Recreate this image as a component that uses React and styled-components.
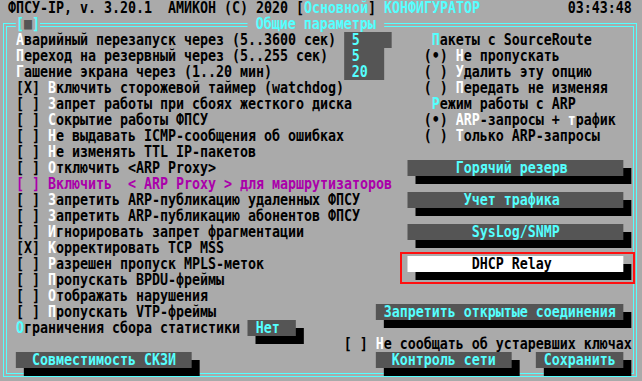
import React from "react";
import styled, { createGlobalStyle } from "styled-components";

const GlobalStyle = createGlobalStyle`
  html, body {
    margin: 0;
    padding: 0;
    overflow: hidden;
    background: #aaaaaa;
  }
`;

const Page = styled.div`
  position: relative;
  width: 642px;
  height: 381px;
  overflow: hidden;
  background: #aaaaaa;
  color: #000;
  font-family: "DejaVu Sans Mono", "Liberation Mono", monospace;
  font-weight: bold;
  font-size: 16px;
`;

// text mode grid: 80 columns of 9.6px squeezed to 8px
const Screen = styled.div`
  width: 768px;
  transform: scaleX(0.833333);
  transform-origin: 0 0;
`;

const Body = styled(Screen)`
  margin: 8px 0 0 -4px;
`;

const Frame = styled.div`
  position: relative;
  box-sizing: border-box;
  width: 634px;
  height: 354px;
  margin: 7px 0 0 3px;
  border: 1px solid #55ffff;
  box-shadow: inset 0 0 0 2px #aaaaaa, inset 0 0 0 3px #55ffff;
`;

const Caption = styled(Screen)`
  position: absolute;
  top: -8px;
  left: -4px;
`;

const Row = styled.div`
  display: grid;
  grid-template-columns: repeat(80, 9.6px);
  height: 16px;
  line-height: 16px;
  letter-spacing: -0.033px;
`;

const toneColor = {
  black: "#000000",
  cyan: "#55ffff",
  white: "#ffffff",
  magenta: "#aa00aa",
  dark: "#555555",
};

const Seg = styled.span`
  grid-row: 1;
  grid-column: ${(p) => p.$c + 1} / span ${(p) => p.$w};
  white-space: pre;
  color: ${(p) => toneColor[p.$tone || "black"]};
  background: ${(p) => (p.$solid ? "#aaaaaa" : "transparent")};
`;

const Hot = styled.span`
  color: ${(p) => toneColor[p.$tone || "white"]};
`;

const Field = styled.span`
  grid-row: 1;
  grid-column: ${(p) => p.$c + 1} / span ${(p) => p.$w};
  white-space: pre;
  background: #555555;
  color: #55ffff;
`;

const Button = styled.span`
  grid-row: 1;
  grid-column: ${(p) => p.$c + 1} / span ${(p) => p.$w};
  white-space: pre;
  background: ${(p) => (p.$active ? "#ffffff" : "#555555")};
  color: ${(p) => (p.$active ? "#000000" : "#55ffff")};
  box-shadow: 9.6px 8px 0 #000000;
`;

const Highlight = styled.div`
  position: absolute;
  left: 400px;
  top: 252px;
  width: 235px;
  height: 32px;
  box-sizing: border-box;
  border: 2px solid #ff1010;
  pointer-events: none;
`;

const Label = ({ c, text, hot = "white" }) => (
  <Seg $c={c} $w={text.length}>
    <Hot $tone={hot}>{text[0]}</Hot>
    {text.slice(1)}
  </Seg>
);

const Check = ({ c = 2, on, text, tone }) => (
  <Seg $c={c} $w={text.length + 4} $tone={tone}>
    {on ? "[X] " : "[ ] "}
    <Hot $tone={tone || "white"}>{text[0]}</Hot>
    {text.slice(1)}
  </Seg>
);

const Radio = ({ c = 53, on, text }) => (
  <Seg $c={c} $w={text.length + 4}>
    {on ? "(•) " : "( ) "}
    <Hot>{text[0]}</Hot>
    {text.slice(1)}
  </Seg>
);

const Btn = ({ c, w, text, active }) => {
  const pad = Math.floor((w - text.length) / 2);
  return (
    <Button $c={c} $w={w} $active={active}>
      {" ".repeat(pad) + text}
    </Button>
  );
};

const App = () => (
  <Page>
    <GlobalStyle />
    <Screen>
      <Row>
        <Seg $c={1} $w={59}>
          {"ФПСУ-IP, v. 3.20.1  АМИКОН (C) 2020 ["}
          <Hot $tone="cyan">Основной</Hot>
          {"] "}
          <Hot $tone="cyan">КОНФИГУРАТОР</Hot>
        </Seg>
        <Seg $c={71} $w={8}>03:43:48</Seg>
      </Row>
    </Screen>

    <Frame>
      <Caption>
        <Row>
          <Seg $c={2} $w={3} $tone="cyan" $solid>
            [<Hot $tone="dark">■</Hot>]
          </Seg>
          <Seg $c={31} $w={17} $tone="cyan" $solid>
            {" Общие параметры "}
          </Seg>
        </Row>
      </Caption>

      <Body>
        <Row>
          <Label c={2} text="Аварийный перезапуск через (5..3600 сек)" />
          <Field $c={43} $w={6}>{" 5"}</Field>
          <Label c={54} hot="cyan" text="Пакеты с SourceRoute" />
        </Row>
        <Row>
          <Label c={2} text="Переход на резервный через (5..255 сек)" />
          <Field $c={43} $w={5}>{" 5"}</Field>
          <Radio on text="Не пропускать" />
        </Row>
        <Row>
          <Label c={2} text="Гашение экрана через (1..20 мин)" />
          <Field $c={43} $w={5}>{" 20"}</Field>
          <Radio text="Удалить эту опцию" />
        </Row>
        <Row>
          <Check on text="Включить сторожевой таймер (watchdog)" />
          <Radio text="Передать не изменяя" />
        </Row>
        <Row>
          <Check text="Запрет работы при сбоях жесткого диска" />
          <Label c={54} hot="cyan" text="Режим работы с ARP" />
        </Row>
        <Row>
          <Check text="Сокрытие работы ФПСУ" />
          <Seg $c={53} $w={24}>
            {"(•) "}
            <Hot>ARP</Hot>
            {"-запросы + "}
            <Hot>т</Hot>
            {"рафик"}
          </Seg>
        </Row>
        <Row>
          <Check text="Не выдавать ICMP-сообщения об ошибках" />
          <Radio text="Только ARP-запросы" />
        </Row>
        <Row>
          <Check text="Не изменять TTL IP-пакетов" />
        </Row>
        <Row>
          <Check text="Отключить <ARP Proxy>" />
          <Btn c={51} w={27} text="Горячий резерв" />
        </Row>
        <Row>
          <Check tone="magenta" text="Включить  < ARP Proxy > для маршрутизаторов" />
        </Row>
        <Row>
          <Check text="Запретить ARP-публикацию удаленных ФПСУ" />
          <Btn c={51} w={27} text="Учет трафика" />
        </Row>
        <Row>
          <Check text="Запретить ARP-публикацию абонентов ФПСУ" />
        </Row>
        <Row>
          <Check text="Игнорировать запрет фрагментации" />
          <Btn c={51} w={27} text="SysLog/SNMP" />
        </Row>
        <Row>
          <Check on text="Корректировать TCP MSS" />
        </Row>
        <Row>
          <Check text="Разрешен пропуск MPLS-меток" />
          <Btn c={51} w={27} text="DHCP Relay" active />
        </Row>
        <Row>
          <Check text="Пропускать BPDU-фреймы" />
        </Row>
        <Row>
          <Check text="Отображать нарушения" />
        </Row>
        <Row>
          <Check text="Пропускать VTP-фреймы" />
          <Btn c={47} w={31} text="Запретить открытые соединения" />
        </Row>
        <Row>
          <Label c={2} hot="cyan" text="Ограничения сбора статистики" />
          <Btn c={31} w={6} text="Нет" />
        </Row>
        <Row>
          <Check c={43} text="Не сообщать об устаревших ключах" />
        </Row>
        <Row>
          <Btn c={2} w={22} text="Совместимость СКЗИ" />
          <Btn c={47} w={17} text="Контроль сети" />
          <Btn c={67} w={11} text="Сохранить" />
        </Row>
      </Body>
    </Frame>

    <Highlight />
  </Page>
);

export default App;
